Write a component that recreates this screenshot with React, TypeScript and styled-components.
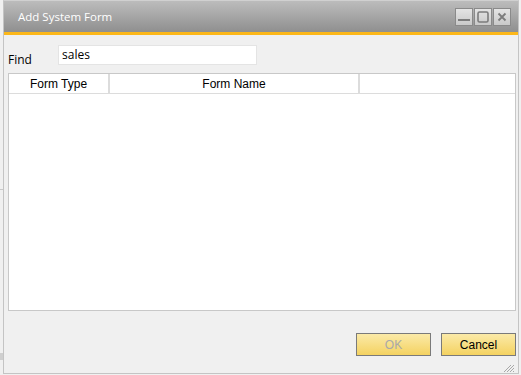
import React from "react";
import styled, { createGlobalStyle } from "styled-components";

const Global = createGlobalStyle`
  html, body { margin: 0; padding: 0; }
  body {
    width: 521px;
    height: 375px;
    overflow: hidden;
    background:
      linear-gradient(#c8c8c8, #c8c8c8) 0 189px / 3px 1px no-repeat,
      linear-gradient(#cfcfcf, #cfcfcf) 0 353px / 3px 7px no-repeat,
      linear-gradient(#c8c8c8, #c8c8c8) 133px 0 / 1px 2px no-repeat,
      #f0f0f0;
    font-family: "Liberation Sans", Arial, sans-serif;
  }
`;

const Page = styled.div`
  padding: 0 0 0 3px;
`;

const Dialog = styled.div`
  box-sizing: border-box;
  width: 516px;
  height: 374px;
  border: 1px solid #c4c4c4;
  border-top-color: #d0d0d0;
  background: #f0f0f0;
  display: flex;
  flex-direction: column;
`;

const TitleBar = styled.div`
  flex-shrink: 0;
  height: 31px;
  box-sizing: border-box;
  padding: 0 7px 0 14px;
  display: flex;
  align-items: center;
  justify-content: space-between;
  background: linear-gradient(#bcbcbc, #8f8f8f);
`;

const Title = styled.span`
  color: #ffffff;
  font-family: "Open Sans", "Noto Sans", sans-serif;
  font-size: 11.5px;
  margin-top: 0;
`;

const WinButtons = styled.div`
  display: flex;
  gap: 1px;
  margin-top: 1px;
`;

const WinButton = styled.div`
  width: 16px;
  height: 16px;
  border: 1px solid #8a8a8a;
  background: linear-gradient(#e4e4e4, #c9c9c9);
  display: flex;
  align-items: center;
  justify-content: center;
`;

const Accent = styled.div`
  flex-shrink: 0;
  height: 3px;
  background: #fcb719;
`;

const Body = styled.div`
  flex: 1;
  min-height: 0;
  display: flex;
  flex-direction: column;
  padding: 10px 2px 0 4px;
`;

const FindRow = styled.div`
  flex-shrink: 0;
  height: 20px;
  display: flex;
  align-items: flex-start;
`;

const Label = styled.span`
  width: 50px;
  font-family: "Open Sans", "Noto Sans", sans-serif;
  font-size: 12px;
  line-height: 17px;
  color: #000;
  padding-top: 6px;
`;

const Input = styled.div`
  box-sizing: border-box;
  width: 199px;
  height: 20px;
  background: #fff;
  border: 1px solid #e4e4e4;
  padding: 0 0 0 3px;
  font-family: "Open Sans", "Noto Sans", sans-serif;
  font-size: 12px;
  line-height: 17px;
  color: #000;
`;

const Table = styled.div`
  flex-shrink: 0;
  box-sizing: border-box;
  margin-top: 8px;
  height: 238px;
  border: 1px solid #c8c8c8;
  background: #fff;
`;

const HeaderRow = styled.div`
  display: grid;
  grid-template-columns: 101px 250px 1fr;
  height: 19px;
  border-bottom: 1px solid #dcdcdc;
`;

const HeaderCell = styled.div<{ $last?: boolean }>`
  display: flex;
  align-items: center;
  justify-content: center;
  font-size: 12px;
  color: #000;
  border-right: ${(p) => (p.$last ? "none" : "2px solid #dcdcdc")};
`;

const Footer = styled.div`
  flex-shrink: 0;
  display: flex;
  justify-content: flex-end;
  gap: 10px;
  padding: 22px 0 0 0;
`;

const Button = styled.div<{ $disabled?: boolean }>`
  box-sizing: border-box;
  width: 75px;
  height: 23px;
  border: 1px solid #7a7a7a;
  background: linear-gradient(#fbeaa8, #f4d261);
  display: flex;
  align-items: center;
  justify-content: center;
  font-size: 12px;
  color: ${(p) => (p.$disabled ? "#a9a9a9" : "#000")};
`;

const GripRow = styled.div`
  flex-shrink: 0;
  display: flex;
  justify-content: flex-end;
  padding: 6px 1px 0 0;
`;

export default function App() {
  return (
    <>
      <Global />
      <Page>
        <Dialog>
          <TitleBar>
            <Title>Add System Form</Title>
            <WinButtons>
              <WinButton>
                <svg width="12" height="12" viewBox="0 0 12 12">
                  <rect x="0" y="8" width="12" height="2" fill="#7c7c7c" />
                </svg>
              </WinButton>
              <WinButton>
                <svg width="12" height="12" viewBox="0 0 12 12">
                  <rect x="1" y="1" width="10" height="10" rx="1.5" fill="none" stroke="#7c7c7c" strokeWidth="1.6" />
                </svg>
              </WinButton>
              <WinButton>
                <svg width="12" height="12" viewBox="0 0 12 12">
                  <path d="M2.5 2.5 L9.5 9.5 M9.5 2.5 L2.5 9.5" stroke="#7c7c7c" strokeWidth="1.8" />
                </svg>
              </WinButton>
            </WinButtons>
          </TitleBar>
          <Accent />
          <Body>
            <FindRow>
              <Label>Find</Label>
              <Input>sales</Input>
            </FindRow>
            <Table>
              <HeaderRow>
                <HeaderCell>Form Type</HeaderCell>
                <HeaderCell>Form Name</HeaderCell>
                <HeaderCell $last />
              </HeaderRow>
            </Table>
            <Footer>
              <Button $disabled>OK</Button>
              <Button>Cancel</Button>
            </Footer>
            <GripRow>
              <svg width="11" height="11" viewBox="0 0 11 11">
                <path d="M10 3 L3 10 M10 6 L6 10 M10 9 L9 10 M7 3 L0 10" stroke="#a8a8a8" strokeWidth="1" />
              </svg>
            </GripRow>
          </Body>
        </Dialog>
      </Page>
    </>
  );
}
